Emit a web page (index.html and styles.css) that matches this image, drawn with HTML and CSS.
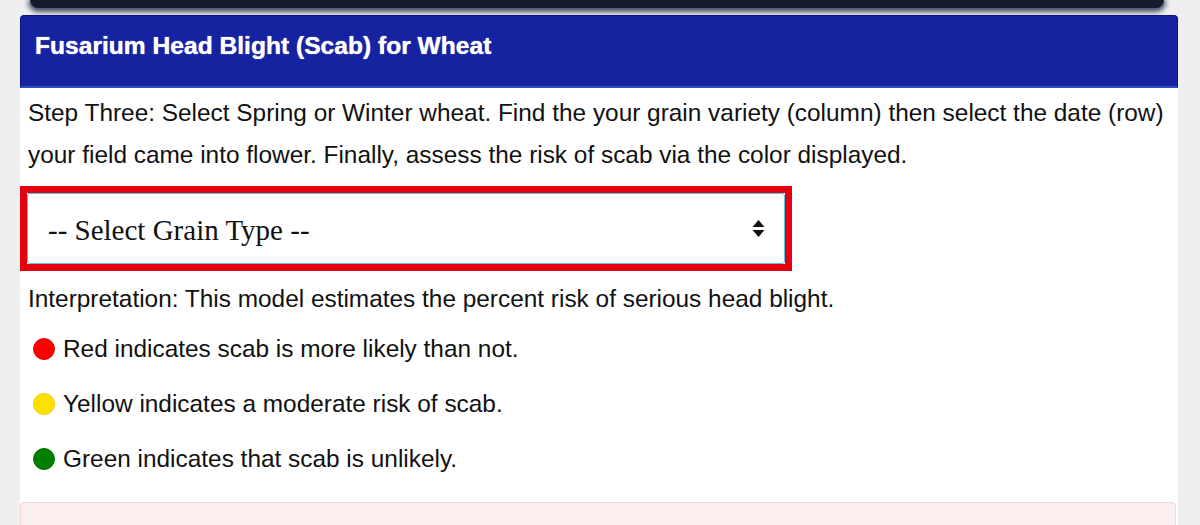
FILE: index.html
```html
<!DOCTYPE html>
<html lang="en">
<head>
<meta charset="utf-8">
<title>Fusarium Head Blight (Scab) for Wheat</title>
<link rel="stylesheet" href="styles.css">
</head>
<body>
<div class="topbar"></div>
<div class="card">
  <div class="card-header">Fusarium Head Blight (Scab) for Wheat</div>
  <p class="step">Step Three: Select Spring or Winter wheat. Find the your grain variety (column) then select the date (row)<br>your field came into flower. Finally, assess the risk of scab via the color displayed.</p>
  <div class="grain-wrap">
    <div class="grain-select">
      <span class="grain-label">-- Select Grain Type --</span>
      <svg class="arrows" width="13" height="17" viewBox="0 0 13 17"><path d="M6.5 0 L12.5 7 L0.5 7 Z M0.5 10 L12.5 10 L6.5 17 Z" fill="#111"/></svg>
    </div>
  </div>
  <p class="interp">Interpretation: This model estimates the percent risk of serious head blight.</p>
  <ul class="legend">
    <li><span class="dot dot-red"></span>Red indicates scab is more likely than not.</li>
    <li><span class="dot dot-yellow"></span>Yellow indicates a moderate risk of scab.</li>
    <li><span class="dot dot-green"></span>Green indicates that scab is unlikely.</li>
  </ul>
  <div class="result-box"></div>
</div>
</body>
</html>
```

FILE: styles.css
```css
html, body {
  margin: 0;
  padding: 0;
}
body {
  background: #efefef;
  font-family: "Liberation Sans", Arial, sans-serif;
  color: #111;
  height: 525px;
  overflow: hidden;
}
.topbar {
  height: 8px;
  margin: 0 36px 0 30px;
  background: #141c2e;
  box-shadow: 0 2px 5px 2px rgba(30, 42, 66, 0.8);
  border-radius: 0 0 8px 8px;
}
.card {
  margin: 7px 0 0 20px;
  width: 1158px;
  background: #fff;
  height: 510px;
}
.card-header {
  box-sizing: border-box;
  height: 73px;
  padding: 16px 14px 0;
  background: #1523a0;
  border: 1px solid #0b1485;
  border-bottom: 2px solid #2a4fc0;
  border-radius: 4px 4px 0 0;
  color: #fff;
  font-weight: bold;
  font-size: 24.6px;
  text-shadow: 0 0 1px #fff;
}
.step {
  margin: 4px 0 0;
  padding: 0 8px;
  font-size: 24.4px;
  line-height: 42px;
  white-space: nowrap;
}
.grain-wrap {
  margin-top: 10px;
  width: 758px;
  border: 7px solid #e5000f;
}
.grain-select {
  box-sizing: border-box;
  height: 71px;
  border: 1px solid #4cc6ea;
  border-radius: 3px;
  background: #fff;
  display: flex;
  align-items: center;
  justify-content: space-between;
  padding: 0 19px 0 20px;
}
.grain-label {
  font-family: "Liberation Serif", "Times New Roman", serif;
  font-size: 29px;
  color: #111;
  padding-top: 4px;
}
.arrows {
  display: block;
}
.interp {
  margin: 7px 0 0;
  padding: 0 8px;
  font-size: 24.4px;
  line-height: 42px;
}
.legend {
  list-style: none;
  margin: 1px 0 0;
  padding: 0 8px;
}
.legend li {
  display: flex;
  align-items: center;
  font-size: 24.4px;
  height: 55px;
}
.dot {
  box-sizing: border-box;
  width: 22px;
  height: 22px;
  border-radius: 50%;
  margin: 0 8px 0 5px;
  flex: none;
}
.dot-red { background: #ff0000; border: 1px solid #e00000; }
.dot-yellow { background: #ffe000; border: 1px solid #f0d000; }
.dot-green { background: #007f00; border: 1px solid #006a00; }
.result-box {
  margin-top: 16px;
  height: 40px;
  background: #fbeeee;
  border: 1px solid #f4d6d6;
  border-radius: 4px 4px 0 0;
  margin-right: 2px;
}
```
